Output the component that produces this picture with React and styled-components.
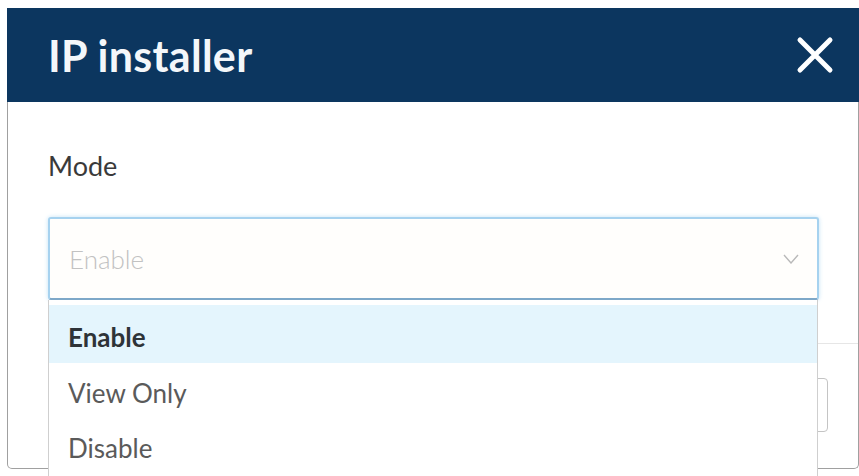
import React from "react";
import styled, { createGlobalStyle } from "styled-components";

const Global = createGlobalStyle`
  html, body { margin: 0; padding: 0; background: #ffffff; overflow: hidden; }
  body { font-family: Lato, "Open Sans", sans-serif; }
  * { box-sizing: border-box; }
`;

const Page = styled.div`
  width: 859px;
  height: 476px;
  padding: 8px 0 0 7px;
  position: relative;
  overflow: hidden;
`;

const Dialog = styled.div`
  width: 852px;
  border: 1px solid #a0a0a0;
  border-top: none;
  border-radius: 0 0 5px 5px;
  background: #fff;
  position: relative;
`;

const Header = styled.div`
  height: 94px;
  background: #0c365f;
  display: flex;
  align-items: center;
  justify-content: space-between;
  padding: 0 25px 0 41px;
  margin: 0 -1px;
`;

const Title = styled.h1`
  margin: 0;
  font-family: Lato, sans-serif;
  font-weight: 700;
  font-size: 43px;
  line-height: 1;
  color: #f4f7fa;
  letter-spacing: 0.3px;
`;

const CloseButton = styled.button`
  border: none;
  background: transparent;
  padding: 0;
  width: 38px;
  height: 38px;
  display: flex;
  align-items: center;
  justify-content: center;
  cursor: pointer;
`;

const Body = styled.div`
  padding: 48px 39px 43px 40px;
`;

const Label = styled.div`
  font-size: 27px;
  line-height: 32px;
  color: #3a3a3a;
  margin-bottom: 35px;
`;

const SelectWrap = styled.div`
  position: relative;
`;

const SelectBox = styled.div`
  height: 83px;
  border: 2px solid #a6d2ef;
  border-bottom-color: #7ea8c8;
  border-radius: 3px;
  box-shadow: 0 0 4px rgba(120, 190, 235, 0.45);
  display: flex;
  align-items: center;
  justify-content: space-between;
  padding: 0 18px 0 19px;
  background: #fffefc;
`;

const Placeholder = styled.span`
  font-size: 26px;
  font-weight: 300;
  color: #c2c2c2;
`;

const Menu = styled.ul`
  position: absolute;
  left: 0;
  top: 100%;
  width: 770px;
  margin: 0;
  padding: 5px 0 0;
  list-style: none;
  background: #fff;
  border-left: 1px solid #cfcfcf;
  border-right: 1px solid #cfcfcf;
  height: 240px;
  z-index: 2;
`;

const Item = styled.li`
  height: ${(p) => (p.$active ? "58px" : "55px")};
  padding: ${(p) => (p.$active ? "6px" : "4px")} 0 0 19px;
  display: flex;
  align-items: center;
  font-size: 26px;
  font-weight: ${(p) => (p.$active ? 700 : 400)};
  color: ${(p) => (p.$active ? "#2e3338" : "#5a5a5a")};
  background: ${(p) => (p.$active ? "#e4f5fd" : "transparent")};
`;

const Divider = styled.div`
  height: 1px;
  margin-left: 40px;
  background: #e6e6e6;
`;

const Footer = styled.div`
  padding: 34px 30px 36px;
  display: flex;
  justify-content: flex-end;
  gap: 16px;
`;

const FooterButton = styled.button`
  height: 54px;
  width: 150px;
  border: 1px solid #c4c4c4;
  border-radius: 4px;
  background: #fff;
  font-family: Lato, sans-serif;
  font-size: 22px;
  color: #444;
`;

export default function App() {
  const options = ["Enable", "View Only", "Disable"];
  return (
    <>
      <Global />
      <Page>
        <Dialog>
          <Header>
            <Title>IP installer</Title>
            <CloseButton aria-label="Close">
              <svg width="38" height="38" viewBox="0 0 38 38">
                <path
                  d="M4 4 L34 34 M34 4 L4 34"
                  stroke="#ffffff"
                  strokeWidth="5"
                  strokeLinecap="round"
                />
              </svg>
            </CloseButton>
          </Header>
          <Body>
            <Label>Mode</Label>
            <SelectWrap>
              <SelectBox>
                <Placeholder>Enable</Placeholder>
                <svg width="16" height="10" viewBox="0 0 16 10">
                  <polyline
                    points="1,1 8,9 15,1"
                    fill="none"
                    stroke="#b9b9b9"
                    strokeWidth="1.4"
                  />
                </svg>
              </SelectBox>
              <Menu>
                {options.map((o, i) => (
                  <Item key={o} $active={i === 0}>
                    {o}
                  </Item>
                ))}
              </Menu>
            </SelectWrap>
          </Body>
          <Divider />
          <Footer>
            <FooterButton>Cancel</FooterButton>
            <FooterButton>OK</FooterButton>
          </Footer>
        </Dialog>
      </Page>
    </>
  );
}
